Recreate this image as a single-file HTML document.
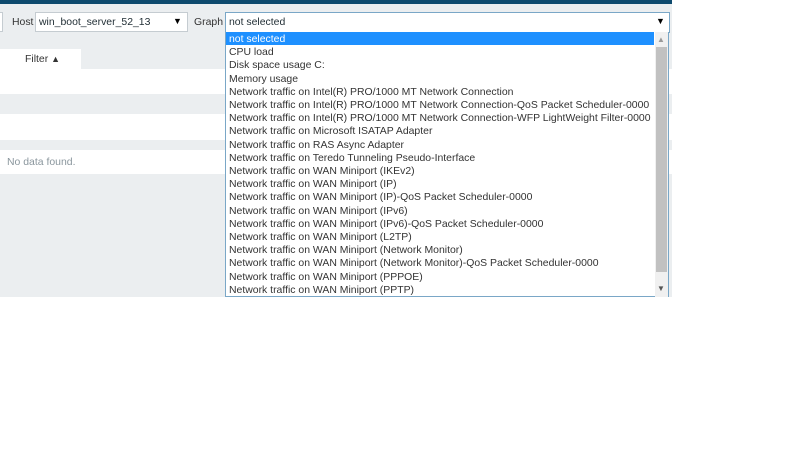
<!DOCTYPE html>
<html><head><style>
*{margin:0;padding:0;box-sizing:border-box}
body{width:800px;height:450px;background:#fff;font-family:"Liberation Sans",Arial,sans-serif;position:relative;overflow:hidden}
.a{position:absolute}
.t{font-size:10.45px;color:#1f2c33}
</style></head><body>
<div class="a" style="left:0;top:0;width:672px;height:297px;background:#ebeef0"></div>
<div class="a" style="left:0;top:0;width:672px;height:4px;background:#0e4a6e"></div>
<div class="a" style="left:0;top:12px;width:3px;height:20px;background:#fff;border:1px solid #c5ccd1;border-left:none"></div>
<div class="a t" style="left:12px;top:17px;color:#333">Host</div>
<div class="a" style="left:35px;top:12px;width:153px;height:20px;background:#fff;border:1px solid #c5ccd1"></div>
<div class="a t" style="left:39px;top:17px">win_boot_server_52_13</div>
<div class="a" style="left:173px;top:16px;font-size:9px">▼</div>
<div class="a t" style="left:194px;top:17px;color:#333">Graph</div>
<div class="a" style="left:225px;top:12px;width:445px;height:21px;background:#fff;border:1px solid #7aa7c7"></div>
<div class="a t" style="left:229px;top:17px">not selected</div>
<div class="a" style="left:656px;top:16px;font-size:9px">▼</div>
<div class="a" style="left:0;top:49px;width:81px;height:21px;background:#fff"></div>
<div class="a t" style="left:25px;top:54px;color:#333">Filter <span style="font-size:9px">▲</span></div>
<div class="a" style="left:0;top:69px;width:672px;height:25px;background:#fff"></div>
<div class="a" style="left:0;top:114px;width:672px;height:26px;background:#fff"></div>
<div class="a" style="left:0;top:150px;width:672px;height:24px;background:#fff"></div>
<div class="a t" style="left:7px;top:157px;color:#8a969d">No data found.</div>
<div class="a" style="left:225px;top:32px;width:444px;height:265px;background:#fff;border:1px solid #7aa7c7;border-top:none"></div>
<div class="a" style="left:226px;top:32px;width:428px;height:13px;background:#1e90ff"></div>
<div class="a" style="left:655px;top:32px;width:13px;height:265px;background:#f0f0f0"></div>
<div class="a" style="left:656px;top:47px;width:11px;height:225px;background:#c1c1c1"></div>
<div class="a" style="left:657px;top:35px;font-size:8px;color:#999">▲</div>
<div class="a" style="left:657px;top:284px;font-size:8px;color:#555">▼</div>
<div class="a t" style="left:229px;top:33px;line-height:13.2px;color:#333">
<div style="color:#fff">not selected</div>
<div>CPU load</div>
<div>Disk space usage C:</div>
<div>Memory usage</div>
<div>Network traffic on Intel(R) PRO/1000 MT Network Connection</div>
<div>Network traffic on Intel(R) PRO/1000 MT Network Connection-QoS Packet Scheduler-0000</div>
<div>Network traffic on Intel(R) PRO/1000 MT Network Connection-WFP LightWeight Filter-0000</div>
<div>Network traffic on Microsoft ISATAP Adapter</div>
<div>Network traffic on RAS Async Adapter</div>
<div>Network traffic on Teredo Tunneling Pseudo-Interface</div>
<div>Network traffic on WAN Miniport (IKEv2)</div>
<div>Network traffic on WAN Miniport (IP)</div>
<div>Network traffic on WAN Miniport (IP)-QoS Packet Scheduler-0000</div>
<div>Network traffic on WAN Miniport (IPv6)</div>
<div>Network traffic on WAN Miniport (IPv6)-QoS Packet Scheduler-0000</div>
<div>Network traffic on WAN Miniport (L2TP)</div>
<div>Network traffic on WAN Miniport (Network Monitor)</div>
<div>Network traffic on WAN Miniport (Network Monitor)-QoS Packet Scheduler-0000</div>
<div>Network traffic on WAN Miniport (PPPOE)</div>
<div>Network traffic on WAN Miniport (PPTP)</div>
</div>
</body></html>
